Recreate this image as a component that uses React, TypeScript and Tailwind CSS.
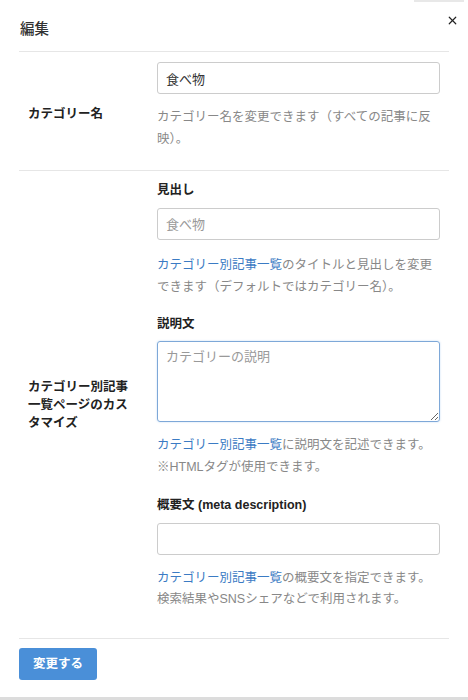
import { X } from "lucide-react"

const font = {
  fontFamily: '"Liberation Sans", "Noto Sans CJK JP", sans-serif',
}

function Help({ link, rest }: { link?: string; rest: string }) {
  return (
    <p className="text-[12.5px] leading-[21.5px] text-[#888]">
      {link && <span className="text-[#3b7bc4]">{link}</span>}
      {rest}
    </p>
  )
}

export default function App() {
  return (
    <div className="flex h-[700px] w-[468px] flex-col bg-white text-[#333]" style={font}>
      <div className="flex h-[2px] justify-end pr-[4px]">
        <div className="w-[50px] bg-[#e8e8e8]" />
      </div>

      <div className="flex flex-1 flex-col px-[19px]">
        <div className="flex h-[50px] items-center justify-between border-b border-[#e6e6e6]">
          <h2 className="pl-[1px] pt-[7px] text-[14.5px] font-medium">編集</h2>
          <button type="button" className="-mr-[10px] -mt-[12px] text-[#222]">
            <X size={13} strokeWidth={2.2} />
          </button>
        </div>

        {/* カテゴリー名 */}
        <div className="flex border-b border-[#e6e6e6]">
          <div className="flex w-[138px] items-center pl-[9px] pr-[22px]">
            <span className="pt-[5px] text-[12.5px] font-bold leading-[18px] text-[#222]">カテゴリー名</span>
          </div>
          <div className="flex-1 pb-[20px] pr-[9px] pt-[10px]">
            <input
              type="text"
              defaultValue="食べ物"
              className="h-[32px] w-full rounded-[3px] border border-[#ccc] px-[8px] text-[13px] text-[#333] outline-none"
            />
            <div className="mt-[13px]">
              <Help rest="カテゴリー名を変更できます（すべての記事に反映）。" />
            </div>
          </div>
        </div>

        {/* カスタマイズ */}
        <div className="flex border-b border-[#e6e6e6]">
          <div className="flex w-[138px] items-center pl-[9px] pr-[22px]">
            <span className="text-[12.5px] font-bold leading-[18px] text-[#222]">
              カテゴリー別記事一覧ページのカスタマイズ
            </span>
          </div>
          <div className="flex-1 pb-[28px] pr-[9px] pt-[9px]">
            <label className="block text-[12.5px] font-bold leading-[20px] text-[#222]">見出し</label>
            <input
              type="text"
              placeholder="食べ物"
              className="mt-[8px] h-[32px] w-full rounded-[3px] border border-[#ccc] px-[8px] text-[13px] outline-none placeholder:text-[#999]"
            />
            <div className="mt-[15px]">
              <Help
                link="カテゴリー別記事一覧"
                rest="のタイトルと見出しを変更できます（デフォルトではカテゴリー名）。"
              />
            </div>

            <label className="mt-[16px] block text-[12.5px] font-bold leading-[20px] text-[#222]">説明文</label>
            <div className="mt-[7px] rounded-[3px] border border-[#7ea8d8] shadow-[0_0_2px_rgba(74,144,217,0.35)]">
              <textarea
                placeholder="カテゴリーの説明"
                className="block h-[79px] w-full rounded-[3px] px-[8px] py-[5px] text-[13px] outline-none placeholder:text-[#999]"
              />
            </div>
            <div className="mt-[13px]">
              <Help link="カテゴリー別記事一覧" rest="に説明文を記述できます。" />
              <Help rest="※HTMLタグが使用できます。" />
            </div>

            <label className="mt-[17px] block text-[12.5px] font-bold leading-[20px] text-[#222]">
              概要文 (meta description)
            </label>
            <input
              type="text"
              className="mt-[8px] h-[32px] w-full rounded-[3px] border border-[#ccc] px-[8px] text-[13px] outline-none"
            />
            <div className="mt-[13px]">
              <p className="text-[12.5px] leading-[21px] text-[#888]">
                <span className="text-[#3b7bc4]">カテゴリー別記事一覧</span>の概要文を指定できます。
              </p>
              <p className="text-[12.5px] leading-[21px] text-[#888]">検索結果やSNSシェアなどで利用されます。</p>
            </div>
          </div>
        </div>

        <div className="pt-[9px]">
          <button
            type="button"
            className="h-[32px] w-[78px] rounded-[3px] bg-[#4a8fd8] text-[12.5px] font-bold text-white"
          >
            変更する
          </button>
        </div>
      </div>

      <div className="h-[3px] bg-[#dcdcdc]" />
    </div>
  )
}
